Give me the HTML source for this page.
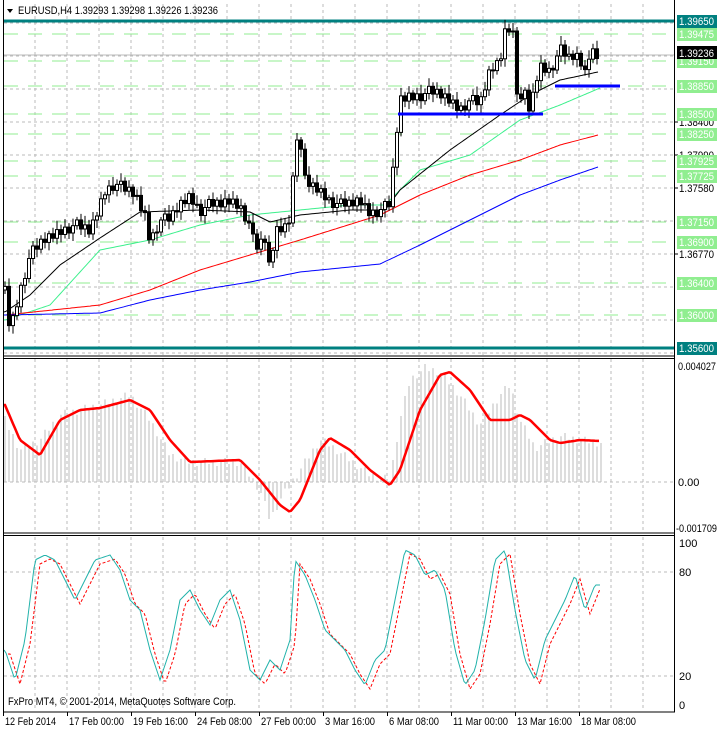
<!DOCTYPE html>
<html><head><meta charset="utf-8"><style>
html,body{margin:0;padding:0;background:#fff;width:717px;height:730px;overflow:hidden}
svg{display:block;font-family:"Liberation Sans",sans-serif;font-size:11px}
</style></head><body>
<svg id="s" width="717" height="730" xmlns="http://www.w3.org/2000/svg"></svg>
<script>
var S=document.getElementById('s'),o='';
function L(x1,y1,x2,y2,c,w,d){o+='<line x1="'+x1+'" y1="'+y1+'" x2="'+x2+'" y2="'+y2+'" stroke="'+c+'" stroke-width="'+(w||1)+'"'+(d?' stroke-dasharray="'+d+'"':'')+'/>';}
function T(x,y,t,c,bg,w,tl){if(bg)o+='<rect x="'+(x-2)+'" y="'+(y-10)+'" width="'+(w||42)+'" height="13" fill="'+bg+'"/>';o+='<text x="'+x+'" y="'+y+'" fill="'+(c||'#000')+'"'+(tl?' textLength="'+tl+'" lengthAdjust="spacingAndGlyphs"':'')+'>'+t+'</text>';}
function interp(p,x){for(var i=0;i<p.length-1;i++){if(x>=p[i][0]&&x<=p[i+1][0]){var t=(x-p[i][0])/(p[i+1][0]-p[i][0]);return p[i][1]+t*(p[i+1][1]-p[i][1]);}}return x<p[0][0]?p[0][1]:p[p.length-1][1];}
function PL(p,c,w,d,x0,x1){var s='';for(var x=x0;x<=x1;x+=2)s+=x+','+interp(p,x).toFixed(1)+' ';o+='<polyline points="'+s+'" fill="none" stroke="'+c+'" stroke-width="'+(w||1)+'"'+(d?' stroke-dasharray="'+d+'"':'')+'/>';}
for(var x=35;x<=643;x+=32){L(x,4,x,355,'#bbb',1,'3,3');L(x,359,x,532,'#bbb',1,'3,3');L(x,537,x,711,'#bbb',1,'3,3');}
for(var y=23;y<=353;y+=33)L(4,y,674,y,'#bbb',1,'3,3');
var G=[[34,'1.39475'],[61,'1.39150'],[86,'1.38850'],[114,'1.38500'],[134,'1.38250'],[161,'1.37925'],[176,'1.37725'],[222,'1.37150'],[242,'1.36900'],[283,'1.36400'],[315,'1.36000']];
G.forEach(function(g){L(4,g[0],674,g[0],'#90ee90',1,'14,10');});
L(4,55,674,55,'#bbb',1);
L(4,21,674,21,'#008080',3);L(4,348,674,348,'#008080',3);
PL([[5,320],[50,305],[100,250],[150,240],[200,225],[250,215],[300,210],[350,205],[385,205],[420,170],[470,155],[520,120],[560,105],[600,88]],'#3cf08c',1,0,4,600);
PL([[5,315],[100,305],[150,290],[200,270],[250,255],[300,240],[380,215],[420,195],[470,175],[520,160],[560,145],[598,135]],'#f00',1,0,4,598);
PL([[5,315],[100,313],[150,300],[200,290],[250,282],[300,272],[380,264],[420,245],[470,220],[520,195],[560,180],[598,167]],'#00f',1,0,4,598);
PL([[5,312],[30,295],[60,265],[100,238],[140,212],[200,210],[250,212],[270,222],[300,215],[350,210],[385,210],[400,190],[450,150],[500,115],[530,95],[560,80],[598,72]],'#000',1,0,4,598);
var C=[[5,290],[10,330],[20,290],[30,255],[45,240],[60,230],[75,225],[90,232],[105,190],[115,183],[125,190],[135,195],[145,215],[150,240],[160,220],[170,220],[180,205],[190,195],[200,210],[210,205],[220,205],[230,200],[240,205],[250,225],[255,250],[265,240],[270,272],[275,230],[285,225],[290,215],[295,150],[300,140],[305,180],[310,185],[320,190],[330,200],[340,205],[350,205],[360,200],[370,212],[380,210],[390,205],[395,150],[400,100],[410,95],[420,95],[430,92],[440,95],[450,100],[460,108],[470,100],[480,105],[490,70],[500,60],[505,30],[510,25],[515,35],[517,100],[525,95],[530,112],[535,85],[540,65],[550,70],[560,50],[570,60],[575,55],[580,60],[585,72],[590,50],[595,50],[599,55]];
var prev=interp(C,3);
for(var x=5;x<=599;x+=4){var c=interp(C,x)+((x*7)%11-5)*1.2;var hi=Math.min(prev,c)-3-((x*13)%7);var lo=Math.max(prev,c)+3+((x*17)%6);
L(x,hi,x,lo,'#000',1);var t=Math.min(prev,c),h=Math.max(Math.abs(prev-c),1);
o+='<rect x="'+(x-1.5)+'" y="'+t+'" width="3" height="'+h+'" fill="'+(c<prev?'#fff':'#000')+'" stroke="#000" stroke-width="1"/>';prev=c;}
L(398,114,543,114,'#00f',3);L(555,86,620,86,'#00f',3);
L(4,482,674,482,'#bbb',1,'3,3');
var H=[[5,420],[20,450],[40,440],[60,415],[80,410],[100,405],[130,395],[150,420],[170,455],[190,462],[240,462],[260,490],[270,520],[280,500],[300,470],[320,440],[330,445],[350,460],[370,475],[390,480],[400,420],[410,380],[425,368],[440,372],[460,395],[480,425],[500,395],[510,385],[520,420],[535,448],[560,436],[580,440],[600,443]];
for(var x=5;x<=601;x+=4){var v=interp(H,x)+((x*7)%5-2)*2;L(x,482,x,v,'#bbb',1);}
PL([[5,405],[20,440],[40,455],[60,420],[80,410],[100,408],[130,400],[150,410],[170,440],[190,462],[240,460],[260,480],[280,505],[290,512],[300,500],[320,450],[330,438],[350,450],[370,470],[390,485],[400,470],[420,410],[440,375],[450,372],[470,390],[490,420],[510,420],[520,415],[530,420],[550,440],[560,443],[580,440],[600,441]],'#f00',2.5,0,3,600);
L(4,572,674,572,'#bbb',1,'3,3');L(4,676,674,676,'#bbb',1,'3,3');
var K=[[5,650],[15,680],[25,640],[35,560],[45,555],[55,560],[65,580],[75,600],[85,580],[95,560],[110,555],[120,570],[130,600],[140,610],[150,650],[160,680],[170,650],[180,600],[190,590],[200,610],[210,625],[220,600],[230,590],[240,620],[250,670],[260,680],[270,660],[280,670],[290,640],[295,560],[305,575],[315,600],[325,630],[335,640],[345,650],[355,670],[365,685],[375,660],[385,650],[395,600],[405,550],[415,555],[425,575],[435,570],[445,590],[455,650],[465,685],[475,670],[485,620],[495,560],[505,550],[515,610],[525,660],[535,680],[545,640],[555,620],[565,600],[575,575],[585,610],[595,585],[600,585]];
var D=K.map(function(p){return [p[0]+5,p[1]+4];});
PL(D,'#f00',1,'3,2',8,600);
PL(K,'#20b2aa',1,0,4,600);
L(3.5,0,3.5,712,'#000',1);L(674.5,0,674.5,712,'#000',1);
L(3,356,675,356,'#000',1);L(3,358.5,675,358.5,'#000',1);
L(3,533,675,533,'#000',1);L(3,535.5,675,535.5,'#000',1);
L(3,712,675,712,'#000',1);
var B=[[122,'1.38400'],[155,'1.37990'],[188,'1.37580'],[254,'1.36770']];
B.forEach(function(b){L(674,b[0],678,b[0],'#000');T(679,b[0]+4,b[1],'#000',0,0,35);});
G.forEach(function(g){T(679,g[0]+4,g[1],'#fff','#90ee90',40,35);});
T(679,25,'1.39650','#fff','#008080',40,35);T(679,352,'1.35600','#fff','#008080',40,35);
o+='<rect x="677" y="46" width="40" height="13" fill="#000"/><text x="679" y="57" fill="#fff" textLength="35" lengthAdjust="spacingAndGlyphs">1.39236</text>';
T(678,370,'0.004027','#000',0,0,38);T(678,486,'0.00');T(676,532,'-0.001709','#000',0,0,41);
T(679,547,'100');T(679,576,'80');T(679,680,'20');T(679,709,'0');
o+='<polygon points="7,9 13,9 10,13" fill="#000"/>';
o+='<text x="18" y="14" fill="#000" textLength="200" lengthAdjust="spacingAndGlyphs">EURUSD,H4  1.39293 1.39298 1.39226 1.39236</text>';
o+='<text x="8" y="705" fill="#000" textLength="228" lengthAdjust="spacingAndGlyphs">FxPro MT4, © 2001-2014, MetaQuotes Software Corp.</text>';
var TL=[[3,'12 Feb 2014',51],[67,'17 Feb 00:00',55],[131,'19 Feb 16:00',55],[195,'24 Feb 08:00',55],[259,'27 Feb 00:00',55],[323,'3 Mar 16:00',50],[387,'6 Mar 08:00',50],[451,'11 Mar 00:00',55],[515,'13 Mar 16:00',55],[579,'18 Mar 08:00',55]];
TL.forEach(function(t){L(t[0]+0.5,712,t[0]+0.5,716,'#000');T(t[0]+2,725,t[1],'#000',0,0,t[2]);});
S.innerHTML=o;
</script>
</body></html>
